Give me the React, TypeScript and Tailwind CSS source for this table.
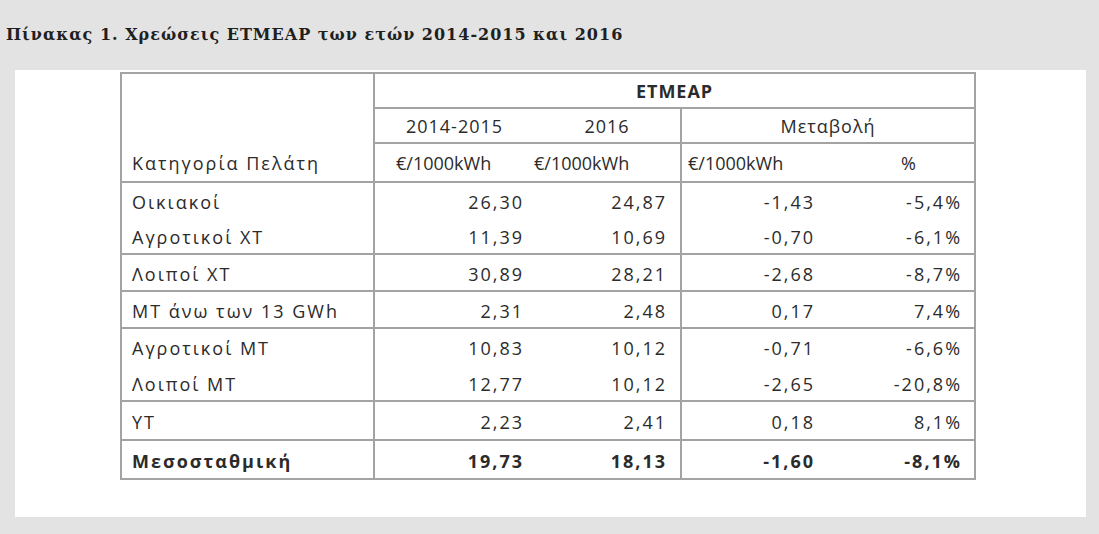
import React from 'react';

interface Row {
    label: string;
    v1: string;
    v2: string;
    diff: string;
    pct: string;
    groupStart?: boolean;
    bold?: boolean;
    h: number;
}

const rows: Row[] = [
    { label: 'Οικιακοί', v1: '26,30', v2: '24,87', diff: '-1,43', pct: '-5,4%', groupStart: true, h: 36 },
    { label: 'Αγροτικοί ΧΤ', v1: '11,39', v2: '10,69', diff: '-0,70', pct: '-6,1%', h: 36 },
    { label: 'Λοιποί ΧΤ', v1: '30,89', v2: '28,21', diff: '-2,68', pct: '-8,7%', groupStart: true, h: 37 },
    { label: 'ΜΤ άνω των 13 GWh', v1: '2,31', v2: '2,48', diff: '0,17', pct: '7,4%', groupStart: true, h: 37 },
    { label: 'Αγροτικοί ΜΤ', v1: '10,83', v2: '10,12', diff: '-0,71', pct: '-6,6%', groupStart: true, h: 37 },
    { label: 'Λοιποί ΜΤ', v1: '12,77', v2: '10,12', diff: '-2,65', pct: '-20,8%', h: 36 },
    { label: 'ΥΤ', v1: '2,23', v2: '2,41', diff: '0,18', pct: '8,1%', groupStart: true, h: 39 },
    { label: 'Μεσοσταθμική', v1: '19,73', v2: '18,13', diff: '-1,60', pct: '-8,1%', groupStart: true, bold: true, h: 39 },
];

const App: React.FC = () => {
    return (
        <div className="w-[1099px] h-[534px] bg-[#e3e3e3] overflow-hidden">
            {/* Caption */}
            <div className="h-[70px] pl-[6px] pt-[25px]">
                <h1 className="font-['DejaVu_Serif',serif] font-bold text-[16px] leading-[20px] text-[#1f1f1f] tracking-[1px]">
                    Πίνακας 1. Χρεώσεις ETMEAP των ετών 2014-2015 και 2016
                </h1>
            </div>

            {/* White panel */}
            <div className="ml-[15px] w-[1071px] h-[447px] bg-white pt-[2px] pl-[105px]">
                <table className="border-collapse table-fixed w-[854px] font-['Open_Sans',sans-serif] text-[18px] tracking-[2px] text-[#2b2b2b] border-2 border-[#a3a3a3]">
                    <colgroup>
                        <col className="w-[253px]" />
                        <col className="w-[160px]" />
                        <col className="w-[147px]" />
                        <col className="w-[147px]" />
                        <col className="w-[147px]" />
                    </colgroup>
                    <thead>
                        <tr className="h-[35px]">
                            <th rowSpan={3} className="border-r-2 border-b-2 border-[#a3a3a3] align-bottom text-left font-normal pl-[10px] pb-[4px]">
                                Κατηγορία Πελάτη
                            </th>
                            <th colSpan={4} className="border-b-2 border-[#a3a3a3] text-center font-bold tracking-[1px] pt-[2px]">
                                ETMEAP
                            </th>
                        </tr>
                        <tr className="h-[35px]">
                            <th className="font-normal text-center tracking-[1px] pt-[2px] border-b-2 border-[#a3a3a3]">2014-2015</th>
                            <th className="font-normal text-center tracking-[1px] pt-[2px] border-b-2 border-r-2 border-[#a3a3a3]">2016</th>
                            <th colSpan={2} className="font-normal text-center tracking-[1px] pt-[2px] border-b-2 border-[#a3a3a3]">Μεταβολή</th>
                        </tr>
                        <tr className="h-[39px]">
                            <th className="font-normal text-left tracking-normal pl-[21px] pt-[2px] border-b-2 border-[#a3a3a3] whitespace-nowrap">€/1000kWh</th>
                            <th className="font-normal text-left tracking-normal pl-0 pt-[2px] border-b-2 border-r-2 border-[#a3a3a3] whitespace-nowrap">€/1000kWh</th>
                            <th className="font-normal text-left tracking-normal pl-[6px] pt-[2px] border-b-2 border-[#a3a3a3] whitespace-nowrap">€/1000kWh</th>
                            <th className="font-normal text-left pl-[73px] pt-[2px] border-b-2 border-[#a3a3a3]">%</th>
                        </tr>
                    </thead>
                    <tbody>
                        {rows.map(r => (
                            <tr
                                key={r.label}
                                style={{ height: r.h }}
                                className={`${r.groupStart ? 'border-t-2 border-[#a3a3a3]' : ''} ${r.bold ? 'font-bold' : ''}`}
                            >
                                <td className="border-r-2 border-[#a3a3a3] pl-[10px] pt-[3px] whitespace-nowrap">{r.label}</td>
                                <td className="text-right pr-[10px] pt-[3px]">{r.v1}</td>
                                <td className="text-right pr-[13px] pt-[3px] border-r-2 border-[#a3a3a3]">{r.v2}</td>
                                <td className="text-right pr-[13px] pt-[3px]">{r.diff}</td>
                                <td className="text-right pr-[12px] pt-[3px]">{r.pct}</td>
                            </tr>
                        ))}
                    </tbody>
                </table>
            </div>
        </div>
    );
};

export default App;
